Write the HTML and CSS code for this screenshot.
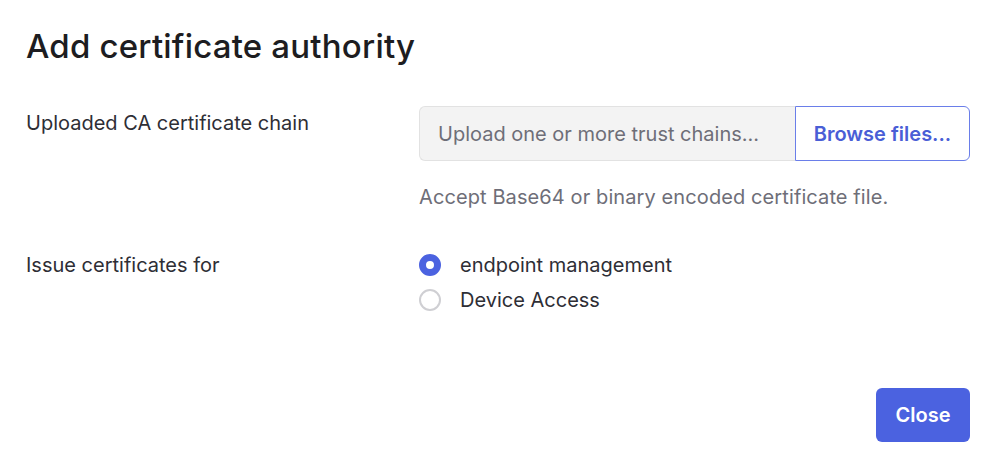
FILE: index.html
```html
<!DOCTYPE html>
<html lang="en">
<head>
<meta charset="utf-8">
<title>Add certificate authority</title>
<link rel="stylesheet" href="styles.css">
</head>
<body>
<div class="dialog">
  <h1 class="title">Add certificate authority</h1>
  <div class="row">
    <div class="label">Uploaded CA certificate chain</div>
    <div class="field">
      <div class="upload">
        <div class="upload-input">Upload one or more trust chains...</div>
        <button class="browse">Browse files...</button>
      </div>
      <p class="help">Accept Base64 or binary encoded certificate file.</p>
    </div>
  </div>
  <div class="row row-radio">
    <div class="label">Issue certificates for</div>
    <div class="field radios">
      <label class="radio"><span class="dot checked"></span><span class="radio-text">endpoint management</span></label>
      <label class="radio"><span class="dot"></span><span class="radio-text">Device Access</span></label>
    </div>
  </div>
  <div class="footer">
    <button class="close">Close</button>
  </div>
</div>
</body>
</html>
```
FILE: styles.css
```css
* { box-sizing: border-box; }
html, body { margin: 0; padding: 0; background: #fff; }
body {
  font-family: Inter, "Noto Sans", sans-serif;
  color: #1d1d21;
  width: 998px;
  height: 461px;
  overflow: hidden;
}
.dialog {
  padding: 23px 28px 0 26px;
  display: flex;
  flex-direction: column;
}
.title {
  margin: 0;
  font-size: 33px;
  font-weight: 500;
  line-height: 46px;
  letter-spacing: 0.2px;
  color: #1d1d21;
}
.row {
  display: flex;
  margin-top: 37px;
}
.label {
  width: 393px;
  flex: none;
  font-size: 20px;
  line-height: 24px;
  color: #2e2e35;
  padding-top: 5px;
}
.field { flex: 1; }
.upload {
  display: flex;
  height: 55px;
}
.upload-input {
  flex: 1;
  background: #f3f3f3;
  border: 1px solid #e2e2e2;
  border-right: none;
  border-radius: 6px 0 0 6px;
  display: flex;
  align-items: center;
  padding-left: 18px;
  font-size: 20px;
  color: #6e6e78;
}
.browse {
  width: 175px;
  border: 1px solid #6a7ee9;
  border-radius: 0 6px 6px 0;
  background: #fff;
  font-family: inherit;
  font-size: 20px;
  font-weight: 600;
  color: #4a5ed6;
  padding: 0;
}
.help {
  margin: 24px 0 0;
  font-size: 20px;
  line-height: 24px;
  letter-spacing: 0.1px;
  color: #6e6e78;
}
.row-radio { margin-top: 44px; }
.row-radio .label { padding-top: 0; }
.radios { display: flex; flex-direction: column; gap: 11px; }
.radio {
  display: flex;
  align-items: center;
  gap: 19px;
  font-size: 20px;
  line-height: 24px;
  color: #2e2e35;
}
.dot {
  width: 22px;
  height: 22px;
  border-radius: 50%;
  border: 2px solid #cfcfd3;
  background: #fff;
  flex: none;
}
.dot.checked {
  border: 7px solid #4b62e0;
}
.footer {
  display: flex;
  justify-content: flex-end;
  margin-top: 76px;
}
.close {
  width: 94px;
  height: 54px;
  border: none;
  border-radius: 6px;
  background: #4b62e0;
  color: #fff;
  font-family: inherit;
  font-size: 20px;
  font-weight: 600;
}
```
